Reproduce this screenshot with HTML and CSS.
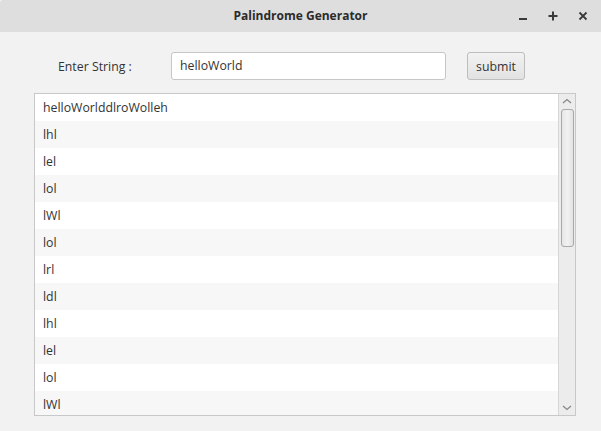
FILE: index.html
```html
<!DOCTYPE html>
<html>
<head>
<meta charset="utf-8">
<link rel="stylesheet" href="styles.css">
</head>
<body>
<div class="window">
  <div class="titlebar">
    <div class="title">Palindrome Generator</div>
    <div class="controls">
      <span class="ctl min"><svg width="10" height="10" viewBox="0 0 10 10"><rect x="1" y="7" width="8" height="2" fill="#3a3a3a"/></svg></span>
      <span class="ctl max"><svg width="10" height="10" viewBox="0 0 10 10"><rect x="4" y="0.5" width="2" height="9" fill="#3a3a3a"/><rect x="0.5" y="4" width="9" height="2" fill="#3a3a3a"/></svg></span>
      <span class="ctl close"><svg width="10" height="10" viewBox="0 0 10 10"><path d="M1.5 1.5 L8.5 8.5 M8.5 1.5 L1.5 8.5" stroke="#3a3a3a" stroke-width="1.8"/></svg></span>
    </div>
  </div>
  <div class="content">
    <div class="form">
      <label class="label">Enter String :</label>
      <div class="input">helloWorld</div>
      <button class="btn">submit</button>
    </div>
    <div class="list">
      <div class="rows">
        <div class="row">helloWorlddlroWolleh</div>
        <div class="row alt">lhl</div>
        <div class="row">lel</div>
        <div class="row alt">lol</div>
        <div class="row">lWl</div>
        <div class="row alt">lol</div>
        <div class="row">lrl</div>
        <div class="row alt">ldl</div>
        <div class="row">lhl</div>
        <div class="row alt">lel</div>
        <div class="row">lol</div>
        <div class="row alt">lWl</div>
      </div>
      <div class="scrollbar">
        <div class="arrow up"><svg width="10" height="6" viewBox="0 0 10 6"><path d="M1 5 L5 1.5 L9 5" fill="none" stroke="#888" stroke-width="1.3"/></svg></div>
        <div class="thumb"></div>
        <div class="track"></div>
        <div class="arrow down"><svg width="10" height="6" viewBox="0 0 10 6"><path d="M1 1 L5 4.5 L9 1" fill="none" stroke="#888" stroke-width="1.3"/></svg></div>
      </div>
    </div>
  </div>
</div>
</body>
</html>
```
FILE: styles.css
```css
html, body {
  margin: 0;
  padding: 0;
  background: #f2f2f2;
  font-family: "Open Sans", "Noto Sans", sans-serif;
  color: #333;
}
.window {
  width: 601px;
  height: 431px;
  overflow: hidden;
  display: flex;
  flex-direction: column;
}
.titlebar {
  height: 32px;
  background: #dedede;
  position: relative;
  display: flex;
  align-items: center;
  justify-content: center;
  border-top-left-radius: 3px;
}
.title {
  font-weight: bold;
  font-size: 12px;
  color: #2b2b2b;
  margin-top: -1px;
}
.controls {
  position: absolute;
  right: 13px;
  top: 11px;
  display: flex;
  gap: 20px;
}
.ctl {
  width: 10px;
  height: 10px;
  display: block;
}
.ctl svg { display: block; }
.content {
  flex: 1;
  display: flex;
  flex-direction: column;
}
.form {
  display: flex;
  align-items: center;
  padding: 20px 0 0 58px;
  height: 28px;
}
.label {
  font-size: 12.3px;
  color: #333;
  width: 113px;
}
.input {
  box-sizing: border-box;
  width: 275px;
  height: 28px;
  background: #fff;
  border: 1px solid #c6c6c6;
  border-radius: 3px;
  font-size: 12.3px;
  line-height: 26px;
  padding-left: 8px;
  color: #333;
}
.btn {
  box-sizing: border-box;
  margin-left: 21px;
  width: 58px;
  height: 28px;
  border: 1px solid #bdbdbd;
  border-radius: 3px;
  background: linear-gradient(#f2f2f2, #e2e2e2);
  font-family: inherit;
  font-size: 12.3px;
  color: #333;
  padding: 0;
}
.list {
  box-sizing: border-box;
  margin: 13px 0 0 34px;
  width: 542px;
  height: 323px;
  border: 1px solid #c8c8c8;
  background: #fff;
  display: flex;
  overflow: hidden;
}
.rows {
  flex: 1;
  overflow: hidden;
}
.row {
  height: 27px;
  line-height: 27px;
  font-size: 12.3px;
  padding-left: 8px;
  color: #333;
  background: #fff;
}
.row.alt { background: #f7f7f7; }
.scrollbar {
  width: 16px;
  border-left: 1px solid #d6d6d6;
  background: #ececec;
  display: flex;
  flex-direction: column;
  align-items: center;
}
.arrow {
  height: 14px;
  display: flex;
  align-items: center;
  justify-content: center;
}
.arrow svg { display: block; }
.thumb {
  box-sizing: border-box;
  width: 13px;
  height: 138px;
  margin-top: 1px;
  border: 1px solid #a9a9a9;
  border-radius: 3px;
  background: linear-gradient(90deg, #e6e6e6, #f2f2f2 50%, #e2e2e2);
}
.track { flex: 1; }
```
